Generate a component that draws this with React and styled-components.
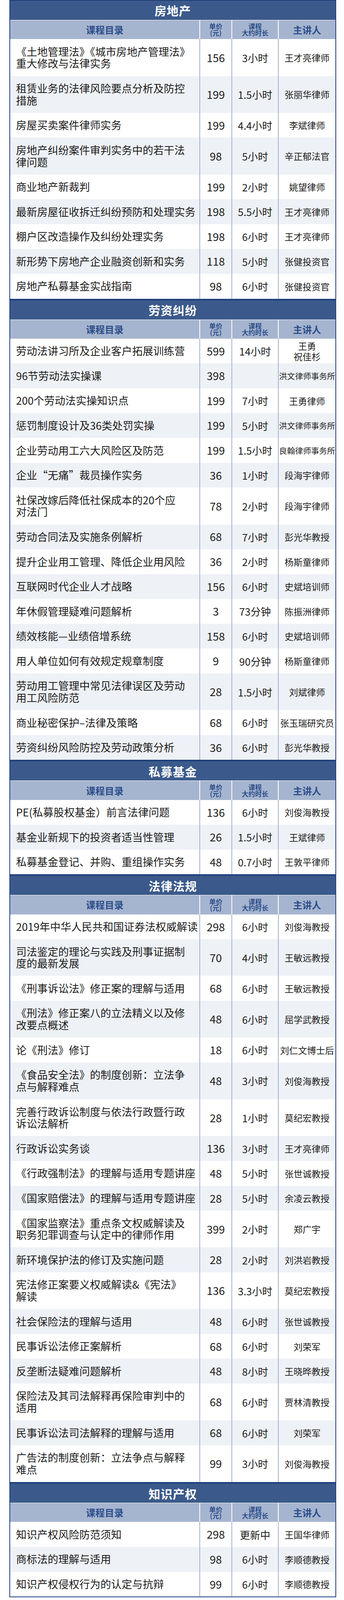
import React from 'react';
import styled, {createGlobalStyle} from 'styled-components';

// vertical sizes follow the window height, so the whole list fits the frame
const vh = px => `${(px / 4670 * 100).toFixed(4)}vh`;

const GlobalStyle = createGlobalStyle`
    *, *::before, *::after {
        box-sizing: border-box;
    }
    body {
        margin: 0;
        background: #ffffff;
        font-family: "Noto Sans CJK SC", "Noto Sans", sans-serif;
    }
`

const Page = styled.div`
    width: 880px;
    padding: 0 20px 0 24px;
`

const Section = styled.section`
    border: 2px solid #1f3f7b;
    background: #ffffff;
`

const SectionTitle = styled.h2`
    margin: 0;
    height: ${vh(57)};
    display: flex;
    align-items: center;
    justify-content: center;
    background: #3b5a8b;
    color: #ffffff;
    font-size: 30px;
    line-height: 1;
    font-weight: 700;
    letter-spacing: 1px;
    border-bottom: 1px solid #ffffff;
`

const Row = styled.div`
    display: grid;
    grid-template-columns: 484px 82px 119px 147px;
    height: ${p => p.$tall ? vh(107.5) : vh(72.5)};
    overflow: hidden;
    background: ${p => p.$alt ? '#eef1f6' : '#ffffff'};
    color: #1c1c1c;
`

const HeadRow = styled.div`
    display: grid;
    grid-template-columns: 484px 82px 119px 147px;
    height: ${vh(55)};
    background: #a6b5cf;
    color: #2c4e8a;
`

const HeadCell = styled.div`
    display: flex;
    align-items: center;
    justify-content: center;
    text-align: center;
    font-weight: 700;
    font-size: ${p => p.$small ? '17px' : '24px'};
    line-height: ${p => p.$small ? vh(19) : '1'};
    white-space: pre;
    & + & {
        border-left: 2px solid #ffffff;
    }
`

const Cell = styled.div`
    display: flex;
    align-items: center;
    justify-content: center;
    text-align: center;
    white-space: pre;
    line-height: 1.2;
    border-left: 2px solid #a3b3cd;
`

const TitleCell = styled.div`
    display: flex;
    align-items: center;
    padding-left: 15px;
    font-size: 27px;
    line-height: ${vh(35)};
    white-space: pre;
`

const PriceCell = styled(Cell)`
    font-size: 28px;
`

const TimeCell = styled(Cell)`
    font-size: 26px;
`

const SpeakerCell = styled(Cell)`
    font-size: ${p => p.$compact ? '20.5px' : '23px'};
    line-height: ${vh(30)};
`

const sections = [
    {
        name: '房地产',
        rows: [
            ['《土地管理法》《城市房地产管理法》\n重大修改与法律实务', '156', '3小时', '王才亮律师'],
            ['租赁业务的法律风险要点分析及防控\n措施', '199', '1.5小时', '张丽华律师'],
            ['房屋买卖案件律师实务', '199', '4.4小时', '李斌律师'],
            ['房地产纠纷案件审判实务中的若干法\n律问题', '98', '5小时', '辛正郁法官'],
            ['商业地产新裁判', '199', '2小时', '姚望律师'],
            ['最新房屋征收拆迁纠纷预防和处理实务', '198', '5.5小时', '王才亮律师'],
            ['棚户区改造操作及纠纷处理实务', '198', '6小时', '王才亮律师'],
            ['新形势下房地产企业融资创新和实务', '118', '5小时', '张健投资官'],
            ['房地产私募基金实战指南', '98', '6小时', '张健投资官'],
        ],
    },
    {
        name: '劳资纠纷',
        rows: [
            ['劳动法讲习所及企业客户拓展训练营', '599', '14小时', '王勇\n祝佳杉'],
            ['96节劳动法实操课', '398', '', '洪文律师事务所'],
            ['200个劳动法实操知识点', '199', '7小时', '王勇律师'],
            ['惩罚制度设计及36类处罚实操', '199', '5小时', '洪文律师事务所'],
            ['企业劳动用工六大风险区及防范', '199', '1.5小时', '良翰律师事务所'],
            ['企业“无痛”裁员操作实务', '36', '1小时', '段海宇律师'],
            ['社保改嫁后降低社保成本的20个应\n对法门', '78', '2小时', '段海宇律师'],
            ['劳动合同法及实施条例解析', '68', '7小时', '彭光华教授'],
            ['提升企业用工管理、降低企业用风险', '36', '2小时', '杨斯童律师'],
            ['互联网时代企业人才战略', '156', '6小时', '史斌培训师'],
            ['年休假管理疑难问题解析', '3', '73分钟', '陈振洲律师'],
            ['绩效核能—业绩倍增系统', '158', '6小时', '史斌培训师'],
            ['用人单位如何有效规定规章制度', '9', '90分钟', '杨斯童律师'],
            ['劳动用工管理中常见法律误区及劳动\n用工风险防范', '28', '1.5小时', '刘斌律师'],
            ['商业秘密保护–法律及策略', '68', '6小时', '张玉瑞研究员'],
            ['劳资纠纷风险防控及劳动政策分析', '36', '6小时', '彭光华教授'],
        ],
    },
    {
        name: '私募基金',
        rows: [
            ['PE(私募股权基金）前言法律问题', '136', '6小时', '刘俊海教授'],
            ['基金业新规下的投资者适当性管理', '26', '1.5小时', '王斌律师'],
            ['私募基金登记、并购、重组操作实务', '48', '0.7小时', '王敦平律师'],
        ],
    },
    {
        name: '法律法规',
        rows: [
            ['2019年中华人民共和国证券法权威解读', '298', '6小时', '刘俊海教授'],
            ['司法鉴定的理论与实践及刑事证据制\n度的最新发展', '70', '4小时', '王敏远教授'],
            ['《刑事诉讼法》修正案的理解与适用', '68', '6小时', '王敏远教授'],
            ['《刑法》修正案八的立法精义以及修\n改要点概述', '48', '6小时', '屈学武教授'],
            ['论《刑法》修订', '18', '6小时', '刘仁文博士后'],
            ['《食品安全法》的制度创新：立法争\n点与解释难点', '48', '3小时', '刘俊海教授'],
            ['完善行政诉讼制度与依法行政暨行政\n诉讼法解析', '28', '1小时', '莫纪宏教授'],
            ['行政诉讼实务谈', '136', '3小时', '王才亮律师'],
            ['《行政强制法》的理解与适用专题讲座', '48', '5小时', '张世诚教授'],
            ['《国家赔偿法》的理解与适用专题讲座', '28', '5小时', '余凌云教授'],
            ['《国家监察法》重点条文权威解读及\n职务犯罪调查与认定中的律师作用', '399', '2小时', '郑广宇'],
            ['新环境保护法的修订及实施问题', '28', '2小时', '刘洪岩教授'],
            ['宪法修正案要义权威解读&《宪法》\n解读', '136', '3.3小时', '莫纪宏教授'],
            ['社会保险法的理解与适用', '48', '6小时', '张世诚教授'],
            ['民事诉讼法修正案解析', '68', '6小时', '刘荣军'],
            ['反垄断法疑难问题解析', '48', '8小时', '王晓晔教授'],
            ['保险法及其司法解释再保险审判中的\n适用', '68', '6小时', '贾林清教授'],
            ['民事诉讼法司法解释的理解与适用', '68', '6小时', '刘荣军'],
            ['广告法的制度创新：立法争点与解释\n难点', '99', '3小时', '刘俊海教授'],
        ],
    },
    {
        name: '知识产权',
        rows: [
            ['知识产权风险防范须知', '298', '更新中', '王国华律师'],
            ['商标法的理解与适用', '98', '6小时', '李顺德教授'],
            ['知识产权侵权行为的认定与抗辩', '99', '6小时', '李顺德教授'],
        ],
    },
]

const CourseSection = ({name, rows}) => (
    <Section>
        <SectionTitle>{name}</SectionTitle>
        <HeadRow>
            <HeadCell>课程目录</HeadCell>
            <HeadCell $small>{'单价\n(元)'}</HeadCell>
            <HeadCell $small>{'课程\n大约时长'}</HeadCell>
            <HeadCell>主讲人</HeadCell>
        </HeadRow>
        {rows.map(([title, price, time, speaker], i) => (
            <Row key={i} $alt={i % 2 === 1} $tall={title.includes('\n')}>
                <TitleCell>{title}</TitleCell>
                <PriceCell>{price}</PriceCell>
                <TimeCell>{time}</TimeCell>
                <SpeakerCell $compact={speaker.length > 6}>{speaker}</SpeakerCell>
            </Row>
        ))}
    </Section>
)

const App = () => {
    return (
        <Page>
            <GlobalStyle/>
            {sections.map(s => (
                <CourseSection key={s.name} name={s.name} rows={s.rows}/>
            ))}
        </Page>
    );
}

export default App;
